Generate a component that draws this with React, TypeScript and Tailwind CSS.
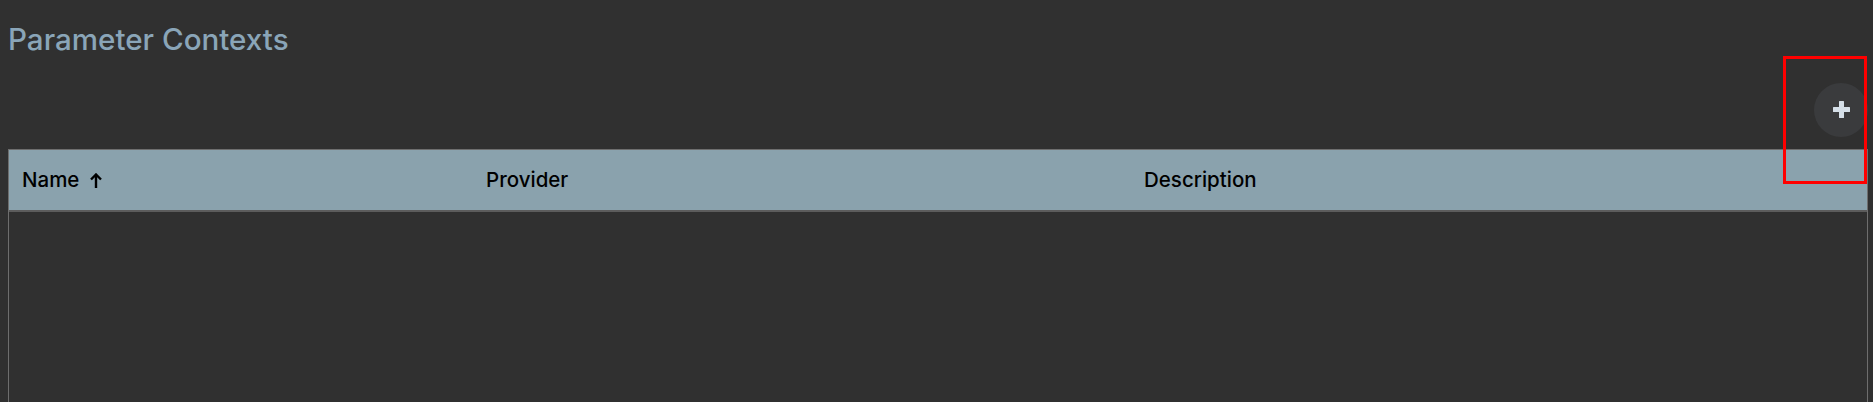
const columns = [
  { key: "name", label: "Name", width: "w-[464px]", sorted: true },
  { key: "provider", label: "Provider", width: "w-[658px]", sorted: false },
  { key: "description", label: "Description", width: "flex-1", sorted: false },
]

function SortArrow() {
  return (
    <svg width="12" height="15" viewBox="0 0 12 15" fill="none" stroke="currentColor" strokeWidth="2.4">
      <path d="M6 15V2" />
      <path d="M1 6.5 6 1.5l5 5" strokeLinejoin="miter" />
    </svg>
  )
}

function PlusIcon() {
  return (
    <svg width="17" height="17" viewBox="0 0 17 17" fill="currentColor">
      <rect x="6" y="0" width="5" height="17" rx="0.5" />
      <rect x="0" y="6" width="17" height="5" rx="0.5" />
    </svg>
  )
}

export default function App() {
  return (
    <div
      className="relative h-[402px] overflow-hidden bg-[#303030] pl-2 pr-[5px]"
      style={{ fontFamily: "Inter, 'Noto Sans', sans-serif" }}
    >
      <h1 className="pt-[19px] text-[29.6px] leading-[40px] font-medium text-[#8aa5b8]">
        Parameter Contexts
      </h1>

      <div className="flex justify-end pt-[24px]">
        <button className="flex h-[54px] w-[54px] items-center justify-center rounded-full bg-[#3a3b3d] pb-[2px] text-[#d5dfe8]">
          <PlusIcon />
        </button>
      </div>

      <div className="mt-3 h-[300px] border border-[#6e6e6e]">
        <div className="flex h-[62px] items-center border-b-2 border-[#5c5c5c] bg-[#8aa2ad] text-[20.5px] font-medium text-black">
          {columns.map((col) => (
            <div key={col.key} className={`${col.width} flex items-center gap-[11px] px-[13px]`}>
              <span>{col.label}</span>
              {col.sorted && <SortArrow />}
            </div>
          ))}
        </div>
      </div>

      {/* review highlight */}
      <div className="pointer-events-none absolute left-[1783px] top-[56px] h-[128px] w-[84px] border-[3px] border-[#ff0000]" />
    </div>
  )
}
